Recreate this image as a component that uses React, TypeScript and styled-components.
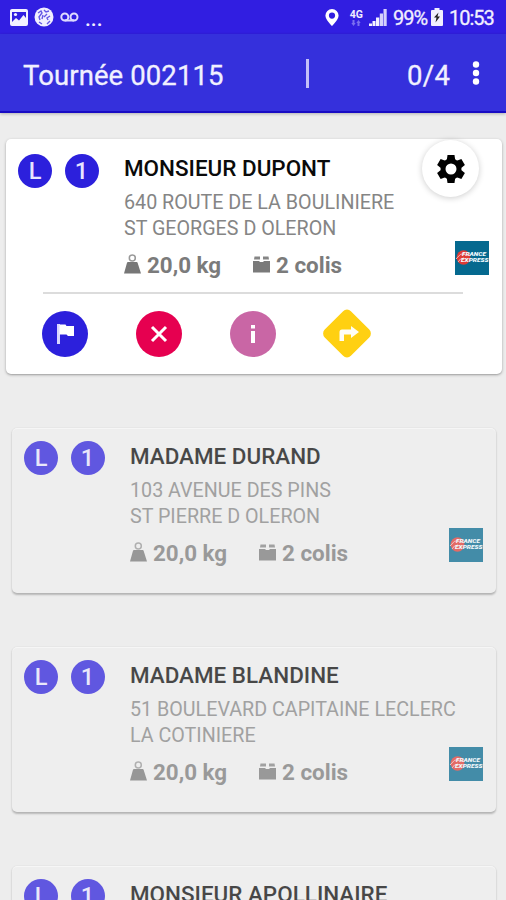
import React from "react";
import styled, { createGlobalStyle } from "styled-components";

const GlobalStyle = createGlobalStyle`
  *, *::before, *::after { box-sizing: border-box; }
  html, body { margin: 0; padding: 0; background: #ededed; overflow: hidden; }
  body { font-family: Roboto, sans-serif; }
  svg { display: block; flex: none; }
`;

const Screen = styled.div`
  width: 506px;
  height: 900px;
  overflow: hidden;
  display: flex;
  flex-direction: column;
  background: #ededed;
`;

const StatusBar = styled.div`
  height: 34px;
  flex: none;
  display: flex;
  justify-content: space-between;
  background: #311ee1;
  color: #f1efff;
  padding: 0 11px 0 10px;
`;

const StatusGroup = styled.div`
  display: flex;
  align-items: center;
`;

const Dots = styled.span`
  font-size: 21px;
  line-height: 24px;
  font-weight: 500;
  margin-left: 6px;
  letter-spacing: 0;
  padding-top: 3px;
`;

const Network = styled.div`
  display: flex;
  flex-direction: column;
  align-items: center;
  font-size: 10.5px;
  line-height: 11px;
  font-weight: 700;
  margin: 0 6px 0 11px;
`;

const StatusText = styled.span<{ $width: number; $indent?: number }>`
  font-size: 20px;
  line-height: 34px;
  padding-top: 1px;
  padding-left: ${(p) => p.$indent ?? 0}px;
  width: ${(p) => p.$width}px;
  letter-spacing: -1px;
  -webkit-text-stroke: 0.3px currentColor;
  white-space: nowrap;
`;

const AppBar = styled.header`
  height: 79px;
  flex: none;
  display: flex;
  align-items: center;
  padding: 5px 26px 0 23px;
  background: #3530dc;
  border-bottom: 2px solid #180bc4;
  box-shadow: 0 1px 3px rgba(0, 0, 0, 0.25);
  color: #f1f0ff;
  font-size: 27.5px;
  line-height: 32px;
  white-space: nowrap;
  -webkit-text-stroke: 0.3px currentColor;
`;

const Title = styled.h1`
  margin: 0;
  width: 283px;
  padding-top: 1px;
  font: inherit;
  letter-spacing: 0.1px;
`;

const Separator = styled.div`
  width: 3px;
  height: 29px;
  margin-bottom: 4px;
  background: #c3c0f8;
`;

const Counter = styled.div`
  width: 44px;
  margin-left: 98px;
  padding-top: 1px;
  letter-spacing: 0.4px;
`;

const MenuButton = styled.button`
  margin: 0 0 4px auto;
  padding: 0;
  border: 0;
  background: none;
`;

const List = styled.main`
  display: flex;
  flex-direction: column;
  gap: 54.5px;
  padding: 26px 4px 0 6px;
`;

const Card = styled.article<{ $active: boolean }>`
  position: relative;
  flex: none;
  height: ${(p) => (p.$active ? 234.5 : 164.5)}px;
  margin: ${(p) => (p.$active ? "0" : "0 6px")};
  padding-top: ${(p) => (p.$active ? 1 : 0)}px;
  border-radius: 5px;
  background: ${(p) => (p.$active ? "#fff" : "#eeeeee")};
  box-shadow: ${(p) =>
    p.$active
      ? "0 1px 3px rgba(0,0,0,.3), 0 1px 1px rgba(0,0,0,.08)"
      : "0 1.5px 2px rgba(0,0,0,.23), 0 0 2px rgba(0,0,0,.06), inset 0 1px 1px rgba(255,255,255,.5)"};
`;

const Content = styled.div<{ $faded: boolean }>`
  display: flex;
  height: ${(p) => (p.$faded ? 153 : 152)}px;
  opacity: ${(p) => (p.$faded ? 0.73 : 1)};
`;

const Badges = styled.div<{ $top: number }>`
  display: flex;
  flex: none;
  gap: 12.5px;
  width: 118px;
  padding: ${(p) => p.$top}px 0 0 12px;
`;

const Badge = styled.span`
  width: 34px;
  height: 34px;
  border-radius: 50%;
  background: #2c20dc;
  color: #e8e5ff;
  font-size: 23.5px;
  font-weight: 500;
  line-height: 35px;
  text-align: center;
`;

const Details = styled.div`
  flex: 1;
  min-width: 0;
  padding-top: 13px;
  white-space: nowrap;
`;

const Name = styled.h2`
  margin: 0 0 6.5px;
  font-size: 22.45px;
  line-height: 30px;
  font-weight: 500;
  color: #0a0a0a;
`;

const Address = styled.div`
  font-size: 19.7px;
  line-height: 26.7px;
  font-weight: 400;
  color: #858585;
`;

const Meta = styled.div`
  display: flex;
  align-items: center;
  height: 30px;
  margin-top: 7.5px;
  font-size: 22.4px;
  font-weight: 700;
  color: #7b7b7b;

  svg { margin-bottom: 2px; }
`;

const MetaItem = styled.span<{ $width?: number }>`
  display: flex;
  align-items: center;
  gap: 6px;
  width: ${(p) => (p.$width ? `${p.$width}px` : "auto")};
`;

const Carrier = styled.div<{ $top: number }>`
  flex: none;
  width: 34px;
  margin: ${(p) => p.$top}px 13px 0 0;
`;

const SettingsButton = styled.button`
  position: absolute;
  top: 1px;
  right: 23px;
  width: 57px;
  height: 57px;
  padding: 0;
  border: 0;
  border-radius: 50%;
  background: #fff;
  box-shadow: 0 1px 6px rgba(0, 0, 0, 0.2);
  display: grid;
  place-items: center;
`;

const Actions = styled.div`
  display: flex;
  gap: 48px;
  margin: 0 39px 0 37px;
  padding-top: 17px;
  border-top: 2px solid #dcdcdc;
`;

const ActionButton = styled.button<{ $color: string }>`
  width: 46px;
  height: 46px;
  margin-left: -1px;
  margin-right: 1px;
  padding: 0;
  border: 0;
  border-radius: 50%;
  background: ${(p) => p.$color};
  display: flex;
  align-items: center;
  justify-content: center;
`;

const PictureIcon = () => (
  <svg width="18" height="17" viewBox="0 0 18 17">
    <path fill="#f3f1ff" fillRule="evenodd" d="M2 0h14a2 2 0 0 1 2 2v13a2 2 0 0 1-2 2H2a2 2 0 0 1-2-2V2C0 .9.9 0 2 0Zm0 3v10l4-4 3 2.500L13.500 6 16 9V3Z" />
    <circle cx="5.500" cy="5.500" r="1.600" fill="#f3f1ff" />
  </svg>
);

const GlobeIcon = () => (
  <svg width="20" height="20" viewBox="0 0 20 20">
    <circle cx="10" cy="10" r="9.500" fill="#f1efff" />
    <path fill="none" stroke="#6357e5" strokeWidth="1.400" d="m4 6 3-2 1 2-3 4 1 3M10 3l2 2 3-1M9 8l-1 4M13 7l-3 3m6-1-3 2 1 2M5 15l3 2m8-3-3 3" />
  </svg>
);

const VoicemailIcon = () => (
  <svg width="19" height="10" viewBox="0 0 19 10" fill="none" stroke="#dedaff" strokeWidth="2">
    <circle cx="4.800" cy="5" r="3.500" />
    <circle cx="14" cy="5" r="3.500" />
    <path d="M4.800 8.500H14" />
  </svg>
);

const PinIcon = () => (
  <svg width="14" height="17" viewBox="0 0 14 17">
    <path fill="#fff" fillRule="evenodd" d="M7 0a6.600 6.600 0 0 1 6.600 6.600C13.600 11 7 17 7 17S.4 11 .4 6.600A6.600 6.600 0 0 1 7 0Zm0 3.500a3.100 3.100 0 1 0 0 6.200 3.100 3.100 0 0 0 0-6.200Z" />
  </svg>
);

const DataArrows = () => (
  <svg width="10" height="6" viewBox="0 0 10 6" fill="#7a6ff0">
    <path d="M1.500 0h2v3h1.200L2.500 6 .3 3h1.200ZM6.500 6h2V3h1.200L7.500 0 5.300 3h1.200Z" />
  </svg>
);

const SignalIcon = () => (
  <svg width="18" height="18" viewBox="0 0 18 18">
    <path fill="#f3f1ff" d="M0 15.500h3V18H0ZM3.500 13H6.500v5H3.500ZM7 9.500h3.300V18H7Z" />
    <path fill="#d5d0fc" d="M10.800 5.500h3.200v12.500h-3.200ZM14.500 1h3.200v17h-3.200Z" />
  </svg>
);

const BatteryIcon = () => (
  <svg width="12" height="18" viewBox="0 0 12 18">
    <path fill="#f1efff" d="M3.500 0h5v2H11q1 0 1 1v14q0 1-1 1H1q-1 0-1-1V3q0-1 1-1h2.500Z" />
    <path fill="#222" d="m7.500 4.500-4.500 5h2.500L4.500 14.500l4.500-6h-2.500Z" />
  </svg>
);

const WeightIcon = () => (
  <svg width="17" height="20" viewBox="0 0 17 20">
    <circle cx="8.300" cy="4" r="3" fill="none" stroke="#999" strokeWidth="1.500" />
    <path fill="#777" d="M4 8h8.600q.8 0 1 .8L17 19.500H0L3 8.800Q3.200 8 4 8Z" />
  </svg>
);

const ParcelIcon = () => (
  <svg width="17" height="17" viewBox="0 0 17 17">
    <path fill="#7a7a7a" d="M0 5h6.500v1h4V5H17v11.500H0Z" />
    <path fill="#858585" d="M1.500 .5H7v3H1ZM10 .5h5.500l.5 3h-6Z" />
  </svg>
);

const GearIcon = () => (
  <svg width="34" height="34" viewBox="0 0 34 34">
    <g transform="translate(17 17)">
      <circle r="8" fill="none" stroke="#000" strokeWidth="5" />
      {[0, 60, 120, 180, 240, 300].map((a) => (
        <path key={a} d="M-4.200-9-3.500-14H3.500L4.200-9Z" transform={`rotate(${a})`} />
      ))}
    </g>
  </svg>
);

const FlagIcon = () => (
  <svg width="20" height="22" viewBox="0 0 20 22">
    <path fill="#d9d5ff" d="M2 1h3v20H2Z" />
    <path fill="#fff" d="M4.500 1.500h6l1 1.500h7.500V13h-6L11.500 11.500H4.500Z" />
  </svg>
);

const CrossIcon = () => (
  <svg width="18" height="18" viewBox="0 0 18 18">
    <path d="m2 2 14 14M16 2 2 16" stroke="#fff" strokeWidth="3" />
  </svg>
);

const InfoIcon = () => (
  <svg width="8" height="20" viewBox="0 0 8 20" fill="#fff">
    <path d="M2 1h4v3.600H2ZM2 7h4v12H2Z" />
  </svg>
);

const DirectionsIcon = () => (
  <svg width="50" height="50" viewBox="0 0 50 50">
    <rect x="6.500" y="6" width="37" height="37" rx="5.500" fill="#ffd012" transform="rotate(45 25 24.500)" />
    <path fill="#fffdf5" d="M17.500 32V23q0-2.500 2.500-2.500h9V17l8 6-8 6v-3.500h-7V32Z" />
  </svg>
);

const CarrierLogo = () => (
  <svg width="34" height="34" viewBox="0 0 34 34">
    <rect width="34" height="34" fill="#05698f" />
    <ellipse cx="8.500" cy="16.500" rx="6.800" ry="7.300" fill="#df3b35" />
    <path d="M1 18q4-6 9-6M3 21q2-4 6-4" fill="none" stroke="#f4b3ae" strokeWidth="1" />
    <g fill="#f3fbff" fontFamily="Roboto, sans-serif" fontWeight="900" fontStyle="italic" fontSize="5.200">
      <text x="7" y="15.400" textLength="24" lengthAdjust="spacingAndGlyphs">FRANCE</text>
      <text x="6" y="21.200" textLength="27.500" lengthAdjust="spacingAndGlyphs">EXPRESS</text>
    </g>
  </svg>
);

const MoreIcon = () => (
  <svg width="8" height="24" viewBox="0 0 8 24" fill="#fff">
    <circle cx="4" cy="3.500" r="3.200" />
    <circle cx="4" cy="12" r="3.200" />
    <circle cx="4" cy="20.500" r="3.200" />
  </svg>
);

const GlobeSlot = styled.span`
  margin: 0 6px;
`;

const BatterySlot = styled.span`
  margin-right: 6px;
`;

interface Stop {
  name: string;
  street: string;
  city: string;
}

const stops: Stop[] = [
  { name: "MONSIEUR DUPONT", street: "640 ROUTE DE LA BOULINIERE", city: "ST GEORGES D OLERON" },
  { name: "MADAME DURAND", street: "103 AVENUE DES PINS", city: "ST PIERRE D OLERON" },
  { name: "MADAME BLANDINE", street: "51 BOULEVARD CAPITAINE LECLERC", city: "LA COTINIERE" },
  { name: "MONSIEUR APOLLINAIRE", street: "", city: "" },
];

function StopCard({ stop, active }: { stop: Stop; active: boolean }) {
  return (
    <Card $active={active}>
      <Content $faded={!active}>
        <Badges $top={active ? 14 : 13}>
          <Badge>L</Badge>
          <Badge>1</Badge>
        </Badges>
        <Details>
          <Name>{stop.name}</Name>
          <Address>{stop.street}</Address>
          <Address>{stop.city}</Address>
          {stop.city && (
            <Meta>
              <MetaItem $width={129}><WeightIcon />20,0 kg</MetaItem>
              <MetaItem><ParcelIcon />2 colis</MetaItem>
            </Meta>
          )}
        </Details>
        {stop.city && <Carrier $top={active ? 101 : 100}><CarrierLogo /></Carrier>}
      </Content>
      {active && (
        <>
          <Actions>
            <ActionButton $color="#2c20dc"><FlagIcon /></ActionButton>
            <ActionButton $color="#e60050"><CrossIcon /></ActionButton>
            <ActionButton $color="#c966a5"><InfoIcon /></ActionButton>
            <ActionButton $color="transparent"><DirectionsIcon /></ActionButton>
          </Actions>
          <SettingsButton><GearIcon /></SettingsButton>
        </>
      )}
    </Card>
  );
}

export default function App() {
  return (
    <Screen>
      <GlobalStyle />
      <StatusBar>
        <StatusGroup>
          <PictureIcon />
          <GlobeSlot><GlobeIcon /></GlobeSlot>
          <VoicemailIcon />
          <Dots>...</Dots>
        </StatusGroup>
        <StatusGroup>
          <PinIcon />
          <Network>4G<DataArrows /></Network>
          <SignalIcon />
          <StatusText $width={44} $indent={6}>99%</StatusText>
          <BatterySlot><BatteryIcon /></BatterySlot>
          <StatusText $width={46}>10:53</StatusText>
        </StatusGroup>
      </StatusBar>
      <AppBar>
        <Title>Tournée 002115</Title>
        <Separator />
        <Counter>0/4</Counter>
        <MenuButton><MoreIcon /></MenuButton>
      </AppBar>
      <List>
        {stops.map((stop, i) => (
          <StopCard key={stop.name} stop={stop} active={i === 0} />
        ))}
      </List>
    </Screen>
  );
}
